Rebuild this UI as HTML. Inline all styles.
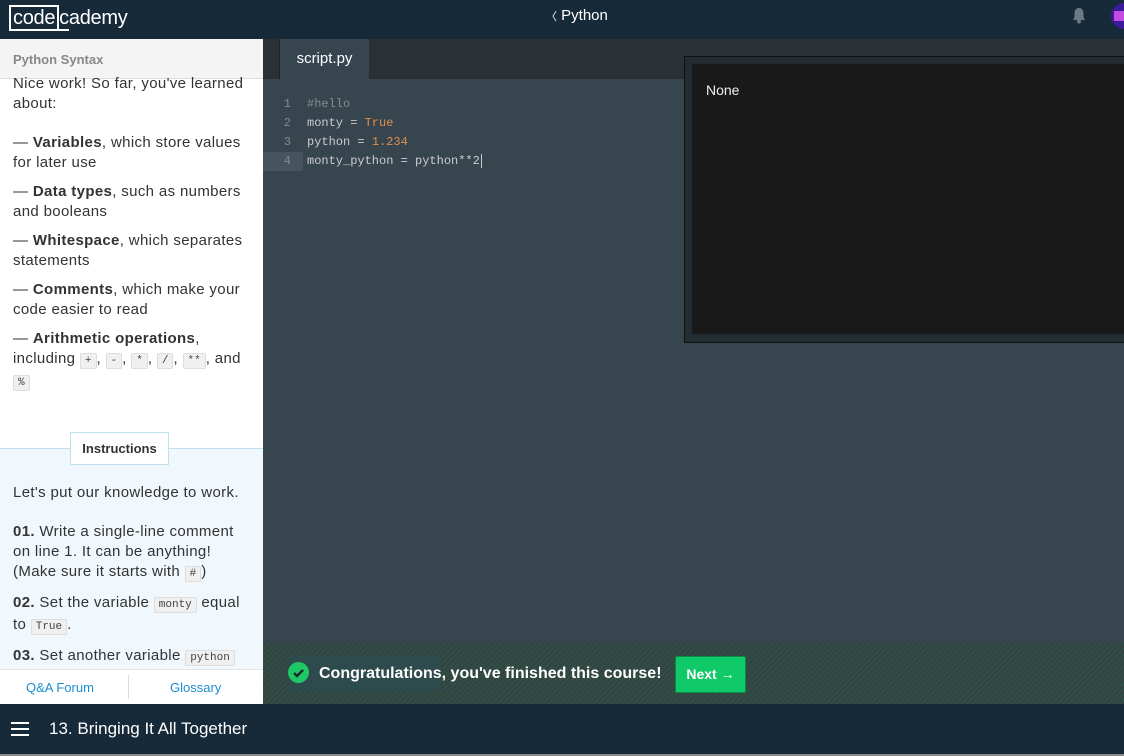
<!DOCTYPE html>
<html><head><meta charset="utf-8"><style>
*{margin:0;padding:0;box-sizing:border-box}
body{width:1124px;height:756px;overflow:hidden;background:#37454f;font-family:"Liberation Sans","DejaVu Sans",sans-serif;position:relative}
.top{position:absolute;left:0;top:0;width:1124px;height:39px;background:#172a3a}
.logo{position:absolute;left:9px;top:5px;color:#fff;font-size:20px;letter-spacing:-0.3px}
.logo span.b{border:2px solid #fff;padding:0 2px;display:inline-block;line-height:22px}
.crumb{position:absolute;left:546px;top:7px;color:#fff;font-size:15px}
.left{position:absolute;left:0;top:39px;width:263px;height:665px;background:#fff;overflow:hidden}
.lh{height:40px;background:#f4f4f4;border-bottom:1px solid #ddd;padding:13px 13px;font-size:13px;font-weight:bold;color:#888}
.lt{padding:0 13px;font-size:15px;color:#333;line-height:20px;letter-spacing:0.35px}
.lt p{margin-bottom:9px}
code{font-family:"Liberation Mono",monospace;font-size:11px;background:#f0f0f0;border:1px solid #ddd;border-radius:2px;padding:1px 4px;color:#444;letter-spacing:0}
.instr{position:absolute;left:0;top:409px;width:263px;height:260px;background:#f0f8fd;border-top:1px solid #bfe0ef}
.instr .lt{padding-right:18px}
.ib{position:absolute;left:70px;top:-17px;width:99px;height:33px;background:#fff;border:1px solid #bfe0ef;font-size:13px;font-weight:bold;color:#333;text-align:center;line-height:31px}
.links{position:absolute;left:0;top:630px;width:263px;height:35px;background:#fff;border-top:1px solid #e4e4e4;font-size:13px;color:#1d8ed0}
.tabs{position:absolute;left:263px;top:39px;width:861px;height:40px;background:#2b3035}
.tab{position:absolute;left:16px;top:0;width:90px;height:40px;background:#37454f;color:#fff;font-size:15px;text-align:center;line-height:40px;border-left:1px solid #222}
.code{position:absolute;left:263px;top:95px;font-family:"Liberation Mono",monospace;font-size:12px;line-height:19px;color:#ccc}
.ln{display:inline-block;width:40px;text-align:right;padding-right:12px;margin-right:4px;color:#888}
.out{position:absolute;left:684px;top:56px;width:440px;height:287px;background:#232b33;border:1px solid #111;border-right:none}
.outi{position:absolute;left:7px;top:7px;right:0;bottom:8px;background:#19191a;color:#eee;font-size:14px;padding:18px 14px}
.bar{position:absolute;left:263px;top:643px;width:861px;height:61px;background:repeating-linear-gradient(135deg,#2e5048 0 1.5px,#344440 1.5px 4px)}
.foot{position:absolute;left:0;top:704px;width:1124px;height:50px;background:#172a3a;color:#fff;font-size:17px}
</style></head><body>
<div class="top">
<div class="logo"><span class="b">code</span><u style="text-decoration:none;border-bottom:2px solid #fff">c</u>ademy</div>
<div class="crumb"><span style="font-size:11px">〈</span> Python</div>
<svg style="position:absolute;left:1071px;top:7px" width="16" height="17" viewBox="0 0 16 17"><path d="M8 1C5 1 3.5 3.5 3.5 6v4L2 13h12l-1.5-3V6C12.5 3.5 11 1 8 1z" fill="#6b7a86"/><circle cx="8" cy="14.5" r="2" fill="#6b7a86"/></svg>
<div style="position:absolute;left:1111px;top:3px;width:26px;height:26px;border-radius:50%;background:#3a1a9a"><div style="position:absolute;left:3px;top:8px;width:10px;height:10px;background:#c34de0"></div></div>
</div>
<div class="left">
<div class="lh">Python Syntax</div>
<div class="lt" style="margin-top:-5px">
<p style="margin-bottom:19px">Nice work! So far, you've learned about:</p>
<p>— <b>Variables</b>, which store values for later use</p>
<p>— <b>Data types</b>, such as numbers and booleans</p>
<p>— <b>Whitespace</b>, which separates statements</p>
<p>— <b>Comments</b>, which make your code easier to read</p>
<p>— <b>Arithmetic operations</b>, including <code>+</code>, <code>-</code>, <code>*</code>, <code>/</code>, <code>**</code>, and <br><code>%</code></p>
</div>
<div class="instr"><div class="ib">Instructions</div>
<div class="lt" style="padding-top:34px">
<p style="margin-bottom:19px">Let's put our knowledge to work.</p>
<p><b>01.</b> Write a single-line comment on line 1. It can be anything! (Make sure it starts with <code>#</code>)</p>
<p><b>02.</b> Set the variable <code>monty</code> equal to <code>True</code>.</p>
<p><b>03.</b> Set another variable <code>python</code> equal to <code>1.234</code>.</p>
</div></div>
<div class="links"><span style="position:absolute;left:26px;top:10px">Q&amp;A Forum</span><span style="position:absolute;left:128px;top:5px;width:1px;height:24px;background:#ddd"></span><span style="position:absolute;left:170px;top:10px">Glossary</span></div>
</div>
<div class="tabs"><div class="tab">script.py</div></div>
<div class="code">
<div><span class="ln">1</span><span style="color:#888">#hello</span></div>
<div><span class="ln">2</span>monty = <span style="color:#e0904a">True</span></div>
<div><span class="ln">3</span>python = <span style="color:#e0904a">1.234</span></div>
<div style="background:linear-gradient(90deg,#46545e 0 40px,transparent 40px)"><span class="ln">4</span>monty_python = python**2<span style="border-left:1px solid #ccc;margin-left:1px"></span></div>
</div>
<div class="out"><div class="outi">None</div></div>
<div class="bar">
<div style="position:absolute;left:26px;top:13px;width:151px;height:35px;background:#2d4a4c"></div>
<svg style="position:absolute;left:25px;top:19px" width="21" height="21"><circle cx="10.5" cy="10.5" r="10.5" fill="#1fc866"/><path d="M6 11l3 3 6-6" stroke="#1a2a2a" stroke-width="2.5" fill="none"/></svg>
<div style="position:absolute;left:56px;top:22px;color:#fff;font-size:16px;font-weight:bold">Congratulations, you've finished this course!</div>
<div style="position:absolute;left:412px;top:13px;width:71px;height:37px;background:#10c968;border:1px solid #0a8a48;border-radius:2px;color:#fff;font-size:14px;font-weight:bold;text-align:center;line-height:35px">Next →</div>
</div>
<div class="foot">
<div style="position:absolute;left:11px;top:18px;width:18px;height:2px;background:#fff;box-shadow:0 6px 0 #fff,0 12px 0 #fff"></div>
<div style="position:absolute;left:49px;top:15px">13. Bringing It All Together</div>
</div>
<div style="position:absolute;left:0;top:754px;width:1124px;height:2px;background:#888"></div>
</body></html>
